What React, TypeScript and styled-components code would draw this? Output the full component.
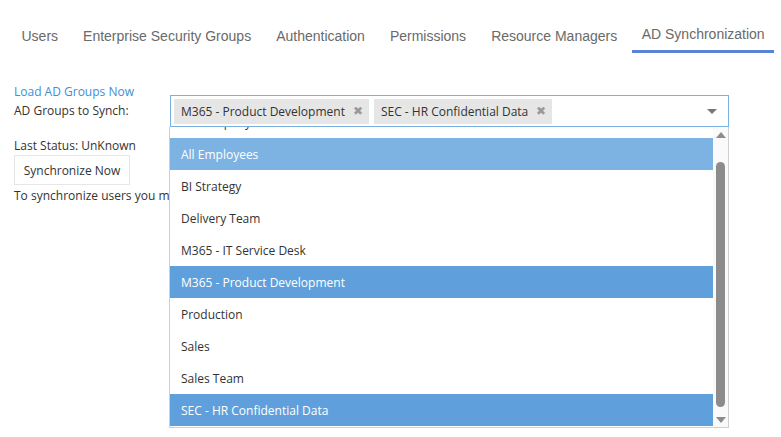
import React, { FC } from "react";
import styled, { createGlobalStyle } from "styled-components";

const GlobalStyle = createGlobalStyle`
  body {
    margin: 0;
    background: #fff;
    font-family: "Open Sans", "Noto Sans", sans-serif;
  }
`;

const Page = styled.div`
  width: 781px;
  height: 437px;
  overflow: hidden;
  position: relative;
`;

const TabBar = styled.nav`
  display: flex;
  padding: 16px 0 0 9px;
  height: 37px;
`;

const Tab = styled.div<{ $active?: boolean }>`
  font-family: "Liberation Sans", Arial, sans-serif;
  font-size: 14px;
  color: #6a6a6a;
  padding: ${(p) => (p.$active ? "10px 9px 0 10px" : "12px 12.5px 0")};
  margin-left: ${(p) => (p.$active ? "2px" : "0")};
  border-bottom: 3px solid ${(p) => (p.$active ? "#5983d6" : "transparent")};
  box-sizing: border-box;
  white-space: nowrap;
`;

const Content = styled.div`
  padding: 31px 0 0 14px;
  font-size: 12px;
  color: #333;
`;

const LoadLink = styled.a`
  display: block;
  line-height: 16px;
  color: #3f8ed6;
  text-decoration: none;
  cursor: pointer;
`;

const SynchRow = styled.div`
  display: flex;
  align-items: center;
  margin-top: -5px;
`;

const Label = styled.div`
  width: 156px;
  line-height: 16px;
`;

const SelectWrap = styled.div`
  position: relative;
  width: 559px;
`;

const SelectBox = styled.div`
  height: 32px;
  box-sizing: border-box;
  border: 1px solid #7ab0e2;
  display: flex;
  align-items: center;
  gap: 5px;
  padding: 0 3px;
`;

const Chip = styled.span`
  display: flex;
  align-items: center;
  gap: 8px;
  height: 25px;
  padding: 0 6px 0 7px;
  background: #e6e6e6;
  color: #333;
  white-space: nowrap;
`;

const ChipRemove = styled.span`
  font-size: 12px;
  line-height: 12px;
  color: #999;
`;

const Caret = styled.span`
  margin-left: auto;
  margin-right: 8px;
  width: 0;
  height: 0;
  border-left: 5px solid transparent;
  border-right: 5px solid transparent;
  border-top: 5px solid #777;
`;

const Dropdown = styled.div`
  position: absolute;
  top: 100%;
  left: -1px;
  right: 0;
  height: 300px;
  background: #fff;
  border: 1px solid #cfcfcf;
  border-top: none;
  display: flex;
  z-index: 5;
`;

const OptionList = styled.div`
  flex: 1;
  overflow: hidden;
`;

const Options = styled.div`
  margin-top: -21px;
`;

const Option = styled.div<{ $tone?: "hover" | "selected" }>`
  height: 32px;
  line-height: 33px;
  padding-left: 11px;
  color: ${(p) => (p.$tone ? "#fff" : "#333")};
  background: ${(p) =>
    p.$tone === "hover" ? "#7db3e3" : p.$tone === "selected" ? "#5fa0dc" : "#fff"};
`;

const ScrollTrack = styled.div`
  width: 15px;
  background: #fafafa;
  display: flex;
  flex-direction: column;
  align-items: center;
  padding: 5px 0 4px;
  box-sizing: border-box;
`;

const ScrollArrow = styled.span<{ $up?: boolean }>`
  width: 0;
  height: 0;
  border-left: 5px solid transparent;
  border-right: 5px solid transparent;
  ${(p) => (p.$up ? "border-bottom: 6px solid #8c8c8c;" : "border-top: 6px solid #8c8c8c;")}
`;

const ScrollThumb = styled.div`
  width: 9px;
  flex: 1;
  margin: 24px 0 10px;
  border-radius: 5px;
  background: #8c8c8c;
`;

const StatusLine = styled.div`
  margin-top: 11px;
  line-height: 16px;
`;

const SyncButton = styled.button`
  display: block;
  width: 116px;
  height: 30px;
  margin-top: 1px;
  background: #fff;
  border: 1px solid #e6e6e6;
  font-family: inherit;
  font-size: 12px;
  color: #333;
  cursor: pointer;
`;

const Note = styled.div`
  margin-top: 3px;
  line-height: 16px;
`;

const tabs = [
  "Users",
  "Enterprise Security Groups",
  "Authentication",
  "Permissions",
  "Resource Managers",
  "AD Synchronization",
];

const groups: { name: string; tone?: "hover" | "selected" }[] = [
  { name: "All Company" },
  { name: "All Employees", tone: "hover" },
  { name: "BI Strategy" },
  { name: "Delivery Team" },
  { name: "M365 - IT Service Desk" },
  { name: "M365 - Product Development", tone: "selected" },
  { name: "Production" },
  { name: "Sales" },
  { name: "Sales Team" },
  { name: "SEC - HR Confidential Data", tone: "selected" },
];

const App: FC = () => {
  const chosen = groups.filter((g) => g.tone === "selected");
  return (
    <Page>
      <GlobalStyle />
      <TabBar>
        {tabs.map((t) => (
          <Tab key={t} $active={t === "AD Synchronization"}>
            {t}
          </Tab>
        ))}
      </TabBar>
      <Content>
        <LoadLink>Load AD Groups Now</LoadLink>
        <SynchRow>
          <Label>AD Groups to Synch:</Label>
          <SelectWrap>
            <SelectBox>
              {chosen.map((g) => (
                <Chip key={g.name}>
                  {g.name}
                  <ChipRemove>✖</ChipRemove>
                </Chip>
              ))}
              <Caret />
            </SelectBox>
            <Dropdown>
              <OptionList>
                <Options>
                  {groups.map((g) => (
                    <Option key={g.name} $tone={g.tone}>
                      {g.name}
                    </Option>
                  ))}
                </Options>
              </OptionList>
              <ScrollTrack>
                <ScrollArrow $up />
                <ScrollThumb />
                <ScrollArrow />
              </ScrollTrack>
            </Dropdown>
          </SelectWrap>
        </SynchRow>
        <StatusLine>Last Status: UnKnown</StatusLine>
        <SyncButton>Synchronize Now</SyncButton>
        <Note>To synchronize users you must first load the AD groups and choose the groups to synch.</Note>
      </Content>
    </Page>
  );
};

export default App;
